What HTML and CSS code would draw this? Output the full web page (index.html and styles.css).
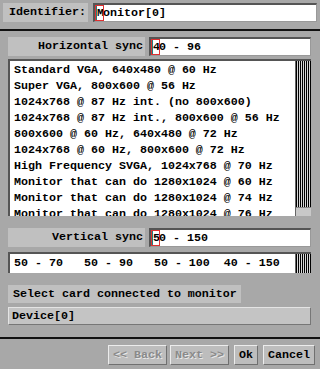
FILE: index.html
```html
<!DOCTYPE html>
<html lang="en">
<head>
  <meta charset="UTF-8">
  <title>Monitor setup</title>
  <link rel="stylesheet" href="styles.css">
</head>
<body>
  <div class="top-row">
    <div class="label">Identifier:</div>
    <div class="field"><span class="cursor">M</span>onitor[0]</div>
  </div>

  <div class="section">
    <div class="row">
      <div class="label label-right">Horizontal sync</div>
      <div class="field"><span class="cursor">4</span>0 - 96</div>
    </div>

    <div class="listbox">
      <div class="list-items">
        <div>Standard VGA, 640x480 @ 60 Hz</div>
        <div>Super VGA, 800x600 @ 56 Hz</div>
        <div>1024x768 @ 87 Hz int. (no 800x600)</div>
        <div>1024x768 @ 87 Hz int., 800x600 @ 56 Hz</div>
        <div>800x600 @ 60 Hz, 640x480 @ 72 Hz</div>
        <div>1024x768 @ 60 Hz, 800x600 @ 72 Hz</div>
        <div>High Frequency SVGA, 1024x768 @ 70 Hz</div>
        <div>Monitor that can do 1280x1024 @ 60 Hz</div>
        <div>Monitor that can do 1280x1024 @ 74 Hz</div>
        <div>Monitor that can do 1280x1024 @ 76 Hz</div>
      </div>
      <div class="scrollbar"><div class="thumb"></div></div>
    </div>

    <div class="row row-vertical">
      <div class="label label-right">Vertical sync</div>
      <div class="field"><span class="cursor">5</span>0 - 150</div>
    </div>

    <div class="listbox values">
      <div class="list-items values-text">50 - 70   50 - 90   50 - 100  40 - 150</div>
      <div class="scrollbar"></div>
    </div>

    <div class="label card-label">Select card connected to monitor</div>
    <div class="device">Device[0]</div>
  </div>

  <div class="buttons">
    <button class="btn disabled">&lt;&lt; Back</button>
    <button class="btn disabled">Next &gt;&gt;</button>
    <button class="btn ok">Ok</button>
    <button class="btn">Cancel</button>
  </div>
</body>
</html>
```

FILE: styles.css
```css
body {
  margin: 0;
  background-color: #a8a8a8;
  font-family: 'Liberation Mono', monospace;
  font-weight: bold;
  font-size: 11.67px;
  color: #000;
  width: 320px;
  height: 369px;
  overflow: hidden;
}

.top-row {
  display: flex;
  gap: 5px;
  padding: 3px 3px 0 3px;
  height: 19px;
  border-bottom: 2px solid #111;
  padding-bottom: 7px;
}

.label {
  background-color: #c0c0c0;
  line-height: 19px;
  padding: 0 5px 0 6px;
  white-space: nowrap;
}

.top-row .label {
  width: 74px;
}

.label-right {
  width: 126px;
  text-align: right;
  padding: 0 2px 0 9px;
}

.field {
  flex: 1;
  background-color: #fff;
  border-top: 2px solid #555;
  border-left: 2px solid #555;
  border-right: 1px solid #999;
  border-bottom: 1px solid #999;
  line-height: 16px;
  padding-left: 1px;
  white-space: nowrap;
}

.cursor {
  display: inline-block;
  outline: 1px solid #e03030;
  border-left: 1px solid #208080;
  width: 6px;
  line-height: 14px;
}

.section {
  padding: 6px 9px 0 8px;
  height: 300px;
  border-bottom: 2px solid #111;
}

.row {
  display: flex;
  gap: 4px;
  height: 19px;
}

.listbox {
  display: flex;
  margin-top: 3px;
  height: 155px;
  background-color: #fff;
  border-top: 2px solid #555;
  border-left: 2px solid #555;
  overflow: hidden;
}

.list-items {
  flex: 1;
  padding: 1px 0 0 4px;
  line-height: 16px;
  white-space: nowrap;
  overflow: hidden;
}

.scrollbar {
  width: 15px;
  display: flex;
  flex-direction: column;
  justify-content: flex-end;
  border-left: 1px solid #666;
  background: repeating-linear-gradient(90deg, #000 0 1px, #d8d8d8 1px 2px);
}

.thumb {
  height: 8px;
  background-color: #c8c8c8;
  border-top: 1px solid #888;
}

.row-vertical {
  margin-top: 12px;
}

.values {
  margin-top: 5px;
  height: 19px;
}

.values-text {
  white-space: pre;
  padding-top: 1px;
  line-height: 17px;
}

.card-label {
  display: inline-block;
  margin-top: 12px;
  line-height: 18px;
  padding: 0 4px 0 5px;
}

.device {
  margin-top: 4px;
  background-color: #c4c4c4;
  border-top: 1px solid #e4e4e4;
  border-left: 1px solid #e4e4e4;
  border-right: 1px solid #777;
  border-bottom: 1px solid #777;
  line-height: 16px;
  padding-left: 3px;
}

.buttons {
  display: flex;
  justify-content: flex-end;
  padding: 6px 5px 0 0;
}

.btn {
  font: inherit;
  background-color: #bdbdbd;
  border-top: 1px solid #ececec;
  border-left: 1px solid #ececec;
  border-right: 1px solid #707070;
  border-bottom: 1px solid #707070;
  padding: 0 4px;
  height: 20px;
  line-height: 18px;
  margin-left: 5px;
  color: #000;
  white-space: nowrap;
}

.btn.disabled {
  color: #8a8a8a;
  text-shadow: 1px 1px 0 #e8e8e8;
}

.btn.disabled + .btn.disabled {
  margin-left: 3px;
}
```
